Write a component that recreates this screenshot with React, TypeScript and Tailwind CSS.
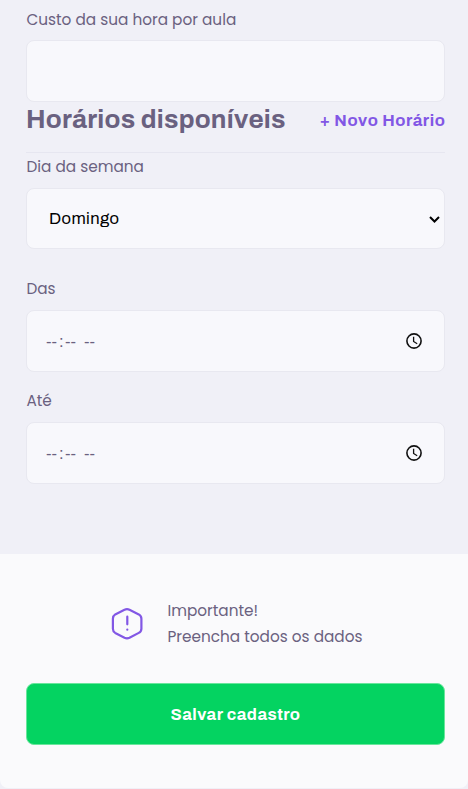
import type { ReactNode } from "react";

const body = "font-['Poppins','Inter',sans-serif] text-[#6a6180]";
const title = "font-['Archivo','Liberation_Sans',sans-serif]";
const box = "w-full rounded-lg border border-[#e8e8f0] bg-[#f8f8fc]";

function Label({ children }: { children: ReactNode }) {
  return <div className={`${body} h-[26px] whitespace-nowrap pl-[0.4px] text-[15.3px] leading-[26px]`}>{children}</div>;
}

function TimeBox() {
  return (
    <div className={`${box} flex h-[62px] items-center justify-between pr-[22px] pl-[19px]`}>
      <div className="flex whitespace-nowrap pt-px font-['Liberation_Sans',sans-serif] text-[16.6px] leading-5 text-[#6a6180]">
        <span className="w-[13px]">--</span>
        <span className="w-[6px]">:</span>
        <span className="w-[19px]">--</span>
        <span>--</span>
      </div>
      <svg className="mb-px" width="16" height="16" viewBox="0 0 16 16" fill="none" stroke="#111" strokeWidth="1.6">
        <circle cx="8" cy="8" r="7.1" />
        <path d="M7.6 3.8V8.5L11.2 10.7" strokeWidth="1.3" />
      </svg>
    </div>
  );
}

export default function App() {
  return (
    <main className="flex h-[789px] w-[468px] flex-col overflow-hidden bg-[#f0f0f7]">
      <section className="h-[554px] pt-[7px] pr-[23px] pl-[26px]">
        <Label>Custo da sua hora por aula</Label>
        <div className={`${box} mt-[7px] h-[62px]`} />
        <div className="flex h-[51px] justify-between border-b border-[#e6e6f0]">
          <h2 className={`${title} whitespace-nowrap text-[26px] font-bold leading-[34px] tracking-[0.24px] text-[#6a6180]`}>Horários disponíveis</h2>
          <button className={`${title} -mr-[0.4px] h-[37px] whitespace-nowrap text-[16.6px] font-bold tracking-[0.54px] text-[#8257e5]`}>+ Novo Horário</button>
        </div>
        <div className="mt-px">
          <Label>Dia da semana</Label>
        </div>
        <div className={`${box} mt-[8px] flex h-[61px] items-center justify-between pr-[4px] pl-[22px]`}>
          <span className={`${title} text-[16.6px] tracking-[0.4px] text-black`}>Domingo</span>
          <svg className="mt-px" width="11" height="7" viewBox="0 0 11 7" fill="none" stroke="black" strokeWidth="2">
            <path d="M1 1l4.5 4.5L10 1" />
          </svg>
        </div>
        <div className="mt-[27px]">
          <Label>Das</Label>
        </div>
        <div className="mt-[8px]">
          <TimeBox />
        </div>
        <div className="mt-[16px]">
          <Label>Até</Label>
        </div>
        <div className="mt-[8px]">
          <TimeBox />
        </div>
      </section>
      <footer className="h-[234px] rounded-b-lg bg-[#fafafc] pt-[44px] pr-[23px] pl-[26px]">
        <div className="flex h-[52px] items-center pl-[85px]">
          <svg width="32" height="32" viewBox="0 0 32 32" fill="none" stroke="#8257e5" strokeWidth="2.2" strokeLinecap="round" strokeLinejoin="round">
            <path d="M13.5 1.8Q16 .6 18.5 1.8L27.8 6.4Q30.4 7.8 30.4 10.7V20.7Q30.4 23.5 27.8 24.9L18.5 29.7Q16 30.9 13.5 29.7L4.2 24.9Q1.9 23.5 1.9 20.7V10.7Q1.9 7.8 4.2 6.4Z" />
            <path d="M16.3 8.7v7.6M16.3 21.6v.1" />
          </svg>
          <div className="ml-[24px]">
            <Label>Importante!</Label>
            <Label>Preencha todos os dados</Label>
          </div>
        </div>
        <button className={`${title} mt-[33px] h-[62px] w-full rounded-lg border border-[#69e69c] bg-[#04d361] pt-px text-[16.6px] font-bold tracking-[0.45px] text-white`}>Salvar cadastro</button>
      </footer>
    </main>
  );
}
